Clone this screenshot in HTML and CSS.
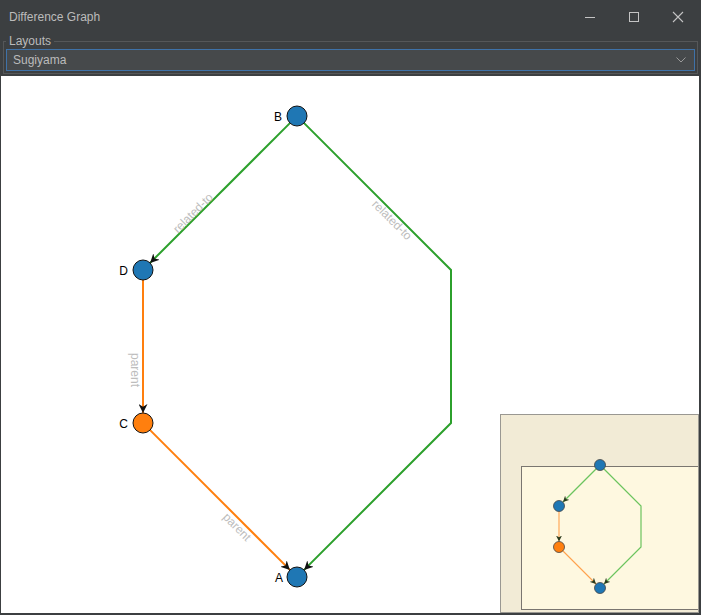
FILE: index.html
```html
<!DOCTYPE html>
<html>
<head>
<meta charset="utf-8">
<title>Difference Graph</title>
<link rel="stylesheet" href="styles.css">
</head>
<body>
<div class="window">
  <div class="titlebar">
    <span class="title">Difference Graph</span>
    <div class="controls">
      <div class="ctl"><svg width="12" height="12" viewBox="0 0 12 12"><line x1="1" y1="6.5" x2="11" y2="6.5" stroke="#c4c4c4" stroke-width="1"/></svg></div>
      <div class="ctl"><svg width="12" height="12" viewBox="0 0 12 12"><rect x="1.5" y="1.5" width="9" height="9" fill="none" stroke="#c4c4c4" stroke-width="1"/></svg></div>
      <div class="ctl"><svg width="12" height="12" viewBox="0 0 12 12"><path d="M1 1 L11 11 M11 1 L1 11" stroke="#c4c4c4" stroke-width="1.1"/></svg></div>
    </div>
  </div>
  <fieldset class="group">
    <legend class="group-label">Layouts</legend>
    <div class="combo">
      <span class="combo-text">Sugiyama</span>
      <svg class="chev" width="10" height="6" viewBox="0 0 10 6"><path d="M0.5 0.5 L5 5 L9.5 0.5" fill="none" stroke="#9a9a9a" stroke-width="1"/></svg>
    </div>
  </fieldset>
  <div class="canvas">
    <svg class="graph" width="698" height="537" viewBox="1 76 698 537">
      <defs>
        <marker id="arr" viewBox="0 0 10 10" refX="10" refY="5" markerWidth="9" markerHeight="9" markerUnits="userSpaceOnUse" orient="auto">
          <path d="M0 0 L10 5 L0 10 L3 5 Z" fill="#111"/>
        </marker>
      </defs>
      <g fill="none" stroke-width="2">
        <line x1="289.9" y1="123.1" x2="150.1" y2="262.9" stroke="#2ca02c" marker-end="url(#arr)"/>
        <polyline points="304.1,123.1 451,270 451,423 304.1,569.9" stroke="#2ca02c" marker-end="url(#arr)"/>
        <line x1="143" y1="280" x2="143" y2="413" stroke="#ff7f0e" marker-end="url(#arr)"/>
        <line x1="150.1" y1="430.1" x2="289.9" y2="569.9" stroke="#ff7f0e" marker-end="url(#arr)"/>
      </g>
      <g class="elabel">
        <text x="193" y="213" transform="rotate(-45 193 213)" text-anchor="middle" dominant-baseline="central">related-to</text>
        <text x="392" y="220" transform="rotate(45 392 220)" text-anchor="middle" dominant-baseline="central">related-to</text>
        <text x="135" y="370" transform="rotate(90 135 370)" text-anchor="middle" dominant-baseline="central">parent</text>
        <text x="237" y="527" transform="rotate(45 237 527)" text-anchor="middle" dominant-baseline="central">parent</text>
      </g>
      <g stroke="#111" stroke-width="1">
        <circle cx="297" cy="116" r="10" fill="#1f77b4"/>
        <circle cx="143" cy="270" r="10" fill="#1f77b4"/>
        <circle cx="143" cy="423" r="10" fill="#ff7f0e"/>
        <circle cx="297" cy="577" r="10" fill="#1f77b4"/>
      </g>
      <g class="nlabel">
        <text x="282" y="120.5" text-anchor="end">B</text>
        <text x="128" y="274.5" text-anchor="end">D</text>
        <text x="128" y="427.5" text-anchor="end">C</text>
        <text x="283" y="581.5" text-anchor="end">A</text>
      </g>
    </svg>
    <div class="minimap">
      <svg width="199" height="199" viewBox="500 414 199 199">
        <defs>
          <marker id="marr" viewBox="0 0 10 10" refX="10" refY="5" markerWidth="6" markerHeight="6" markerUnits="userSpaceOnUse" orient="auto">
            <path d="M0 0 L10 5 L0 10 L3 5 Z" fill="#2a3a1c"/>
          </marker>
        </defs>
        <rect x="521.5" y="466.5" width="190" height="143" fill="#fef8e0" stroke="#7a7670" stroke-width="1"/>
        <path class="mg" d="M603.5 468.5 L641 506 L641 547 L604 584" marker-end="url(#marr)"/>
        <path class="mg" d="M596.5 468.5 L563 502" marker-end="url(#marr)"/>
        <path class="mo" d="M559 511.5 L559 541.5" marker-end="url(#marr)"/>
        <path class="mo" d="M563 551 L596 584" marker-end="url(#marr)"/>
        <g stroke="#444" stroke-width="0.8">
          <circle cx="600" cy="465" r="5.5" fill="#1f77b4"/>
          <circle cx="559" cy="506" r="5.5" fill="#1f77b4"/>
          <circle cx="559" cy="547" r="5.5" fill="#ff7f0e"/>
          <circle cx="600" cy="588" r="5.5" fill="#1f77b4"/>
        </g>
      </svg>
    </div>
  </div>
</div>
</body>
</html>
```

FILE: styles.css
```css
html, body {
  margin: 0;
  padding: 0;
}
body {
  width: 701px;
  height: 615px;
  overflow: hidden;
  background: #3c3f41;
  font-family: "Liberation Sans", Arial, sans-serif;
}
.window {
  width: 701px;
  height: 615px;
  display: flex;
  flex-direction: column;
  background: #3c3f41;
}
.titlebar {
  height: 33px;
  display: flex;
  align-items: center;
  padding-left: 9px;
  flex: none;
}
.title {
  flex: 1;
  color: #bbbbbb;
  font-size: 12px;
}
.controls {
  display: flex;
  height: 33px;
  padding-right: 1px;
}
.ctl {
  width: 44px;
  height: 33px;
  display: flex;
  align-items: center;
  justify-content: center;
}
.group {
  margin: 1px 3px 0 3px;
  padding: 0 2px 2px 2px;
  border: 1px solid #555759;
  min-width: 0;
  flex: none;
}
.group-label {
  color: #bbbbbb;
  font-size: 12px;
  line-height: 15px;
  padding: 0 3px;
  margin-left: 0;
}
.combo {
  height: 20px;
  border: 1px solid #3f72a8;
  background: #46494b;
  display: flex;
  align-items: center;
  padding: 0 8px 0 6px;
}
.combo-text {
  flex: 1;
  color: #bbbbbb;
  font-size: 12px;
}
.chev {
  display: block;
}
.canvas {
  position: relative;
  margin: 2px 2px 0 1px;
  height: 537px;
  background: #ffffff;
  flex: none;
}
.graph {
  display: block;
}
.elabel text {
  fill: #bdbdbd;
  font-size: 12px;
  font-family: "Liberation Sans", Arial, sans-serif;
}
.nlabel text {
  fill: #000;
  font-size: 12px;
  font-family: "Liberation Sans", Arial, sans-serif;
}
.minimap {
  position: absolute;
  right: 0;
  bottom: 0;
  width: 197px;
  height: 197px;
  border: 1px solid #9a9892;
  background: #f2ebd6;
  overflow: hidden;
}
.minimap svg {
  display: block;
  margin: -1px 0 0 -1px;
}
.mg {
  fill: none;
  stroke: #6cc45e;
  stroke-width: 1.2;
}
.mo {
  fill: none;
  stroke: #ffa14d;
  stroke-width: 1.1;
}
```
